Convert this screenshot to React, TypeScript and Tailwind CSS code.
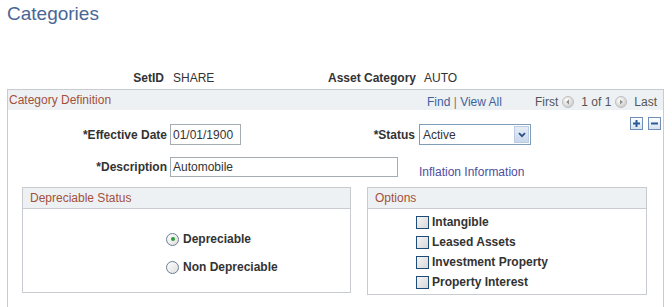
import React from 'react';

const navIcon = (dir: 'left' | 'right') => (
  <svg width="12" height="12" viewBox="0 0 12 12" className="ml-[4px] mr-[7px]">
    <defs>
      <radialGradient id={`g-${dir}`} cx="40%" cy="35%" r="70%">
        <stop offset="0%" stopColor="#ffffff" />
        <stop offset="100%" stopColor="#c9c9c9" />
      </radialGradient>
    </defs>
    <circle cx="6" cy="6" r="5.5" fill={`url(#g-${dir})`} stroke="#bdbdbd" />
    {dir === 'left' ? (
      <path d="M7 3.5 L4.2 6 L7 8.5 Z" fill="#8c8c8c" />
    ) : (
      <path d="M5 3.5 L7.8 6 L5 8.5 Z" fill="#8c8c8c" />
    )}
  </svg>
);

const Radio = ({ checked, label }: { checked?: boolean; label: string }) => (
  <div className="flex h-[28px] items-center gap-[4px]">
    <span className="flex h-[13px] w-[13px] items-center justify-center rounded-full border border-[#6a7d92] bg-gradient-to-br from-white to-[#dedede]">
      {checked && <span className="h-[4px] w-[4px] rounded-full bg-[#2f9b3a]" />}
    </span>
    <span className="font-bold leading-[14px]">{label}</span>
  </div>
);

const Check = ({ label }: { label: string }) => (
  <div className="flex h-[20px] items-center gap-[3px]">
    <span className="h-[13px] w-[13px] border border-[#1f4b7a] bg-gradient-to-br from-[#f4f4f4] to-[#d9d9d9]" />
    <span className="font-bold leading-[14px]">{label}</span>
  </div>
);

const GroupBox = ({ title, className, children }: { title: string; className: string; children: React.ReactNode }) => (
  <div className={`border border-[#c8ccd1] ${className}`}>
    <div className="h-[21px] border-b border-[#c8ccd1] bg-[#eef1f4] pl-[7px] leading-[20px] text-[#a2503a]">{title}</div>
    {children}
  </div>
);

export default function App() {
  return (
    <div className="h-[307px] w-[672px] overflow-hidden bg-white pl-[7px] font-['Liberation_Sans',Arial,sans-serif] text-[12px] text-[#333]">
      <h1 className="h-[26px] pt-[2px] text-[19px] leading-[24px] text-[#4a6694]">Categories</h1>

      {/* key fields */}
      <div className="mt-[45px] flex h-[14px] leading-[14px]">
        <span className="w-[157px] text-right font-bold">SetID</span>
        <span className="w-[120px] pl-[9px]">SHARE</span>
        <span className="w-[132px] text-right font-bold">Asset Category</span>
        <span className="pl-[8px]">AUTO</span>
      </div>

      {/* Category Definition */}
      <div className="mt-[4px] h-[230px] w-[657px] border border-[#c8ccd1]">
        <div className="flex h-[20px] items-center bg-[#eef1f4] pr-[6px] leading-[14px]">
          <span className="pl-[1px] text-[#a2503a]">Category Definition</span>
          <span className="ml-auto mt-[3px] text-[#3e62a0]">
            Find <span className="text-[#b35a5a]">|</span> View All
          </span>
          <span className="ml-[33px] mt-[3px] flex items-center text-[#555]">
            First{navIcon('left')}1 of 1{navIcon('right')}Last
          </span>
        </div>

        <div className="mt-[14px] flex h-[21px] items-center">
          <span className="w-[159px] text-right font-bold leading-[14px]">*Effective Date</span>
          <div className="ml-[3px] flex h-[21px] w-[71px] items-center border border-[#a5acb2] pl-[2px] leading-[14px]">01/01/1900</div>
          <span className="w-[174px] text-right font-bold leading-[14px]">*Status</span>
          <div className="ml-[4px] flex h-[21px] w-[112px] items-center border border-[#7f9db9] pl-[3px] pr-[1px] leading-[14px]">
            <span>Active</span>
            <span className="ml-auto flex h-[17px] w-[15px] items-center justify-center border border-[#bccce2] bg-gradient-to-b from-[#e6edf7] to-[#c9d7ec]">
              <svg width="8" height="6" viewBox="0 0 8 6">
                <path d="M1 1.2 L4 4.2 L7 1.2" fill="none" stroke="#2b4f86" strokeWidth="1.8" />
              </svg>
            </span>
          </div>
          <div className="ml-auto mr-[2px] flex gap-[5px] self-start mt-[-7px]">
            <span className="flex h-[13px] w-[13px] items-center justify-center border border-[#6f8fb6] bg-gradient-to-b from-white to-[#d8e2ee]">
              <svg width="9" height="9" viewBox="0 0 9 9">
                <path d="M4.5 1 V8 M1 4.5 H8" stroke="#2a5a9c" strokeWidth="2" />
              </svg>
            </span>
            <span className="flex h-[13px] w-[13px] items-center justify-center border border-[#6f8fb6] bg-gradient-to-b from-white to-[#d8e2ee]">
              <svg width="9" height="9" viewBox="0 0 9 9">
                <path d="M1 4.5 H8" stroke="#2a5a9c" strokeWidth="2" />
              </svg>
            </span>
          </div>
        </div>

        <div className="mt-[12px] flex h-[20px] items-center">
          <span className="w-[159px] text-right font-bold leading-[14px]">*Description</span>
          <div className="ml-[3px] flex h-[20px] w-[228px] items-center border border-[#a5acb2] pl-[2px] leading-[14px]">Automobile</div>
          <span className="ml-[21px] mb-[-2px] self-end leading-[14px] text-[#4f4da0]">Inflation Information</span>
        </div>

        <div className="mt-[10px] flex items-start">
          <GroupBox title="Depreciable Status" className="ml-[14px] h-[106px] w-[329px]">
            <div className="pl-[143px] pt-[16px]">
              <Radio checked label="Depreciable" />
              <Radio label="Non Depreciable" />
            </div>
          </GroupBox>
          <GroupBox title="Options" className="ml-[16px] h-[108px] w-[280px]">
            <div className="pl-[48px] pt-[3px]">
              <Check label="Intangible" />
              <Check label="Leased Assets" />
              <Check label="Investment Property" />
              <Check label="Property Interest" />
            </div>
          </GroupBox>
        </div>
      </div>
    </div>
  );
}
